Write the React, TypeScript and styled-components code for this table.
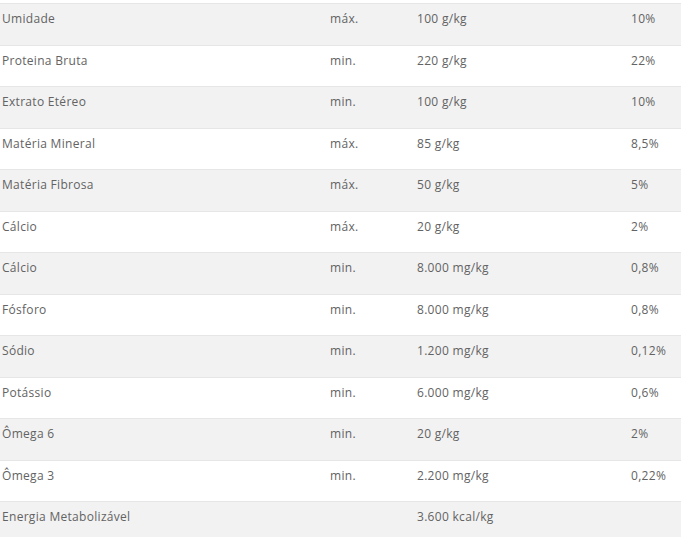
import React from "react";
import styled, { createGlobalStyle } from "styled-components";

const Global = createGlobalStyle`
  html, body { margin: 0; padding: 0; background: #ffffff; }
  body { font-family: "Open Sans", "Liberation Sans", sans-serif; }
`;

const Table = styled.div`
  display: flex;
  flex-direction: column;
  padding-top: 3px;
  width: 681px;
`;

const Row = styled.div<{ $shaded: boolean }>`
  display: grid;
  grid-template-columns: 328px 87px 214px 1fr;
  height: 41.5px;
  box-sizing: border-box;
  border-top: 1.5px solid #e6e6e6;
  background: ${(p) => (p.$shaded ? "#f2f2f2" : "#ffffff")};
`;

const Cell = styled.div`
  padding: 7px 0 0 2px;
  font-size: 12px;
  line-height: 16px;
  letter-spacing: 0.3px;
  color: #636363;
  white-space: nowrap;
`;

const rows: [string, string, string, string][] = [
  ["Umidade", "máx.", "100 g/kg", "10%"],
  ["Proteina Bruta", "min.", "220 g/kg", "22%"],
  ["Extrato Etéreo", "min.", "100 g/kg", "10%"],
  ["Matéria Mineral", "máx.", "85 g/kg", "8,5%"],
  ["Matéria Fibrosa", "máx.", "50 g/kg", "5%"],
  ["Cálcio", "máx.", "20 g/kg", "2%"],
  ["Cálcio", "min.", "8.000 mg/kg", "0,8%"],
  ["Fósforo", "min.", "8.000 mg/kg", "0,8%"],
  ["Sódio", "min.", "1.200 mg/kg", "0,12%"],
  ["Potássio", "min.", "6.000 mg/kg", "0,6%"],
  ["Ômega 6", "min.", "20 g/kg", "2%"],
  ["Ômega 3", "min.", "2.200 mg/kg", "0,22%"],
  ["Energia Metabolizável", "", "3.600 kcal/kg", ""],
];

export default function App() {
  return (
    <>
      <Global />
      <Table>
        {rows.map((r, i) => (
          <Row key={i} $shaded={i % 2 === 0}>
            {r.map((c, j) => (
              <Cell key={j}>{c}</Cell>
            ))}
          </Row>
        ))}
      </Table>
    </>
  );
}
